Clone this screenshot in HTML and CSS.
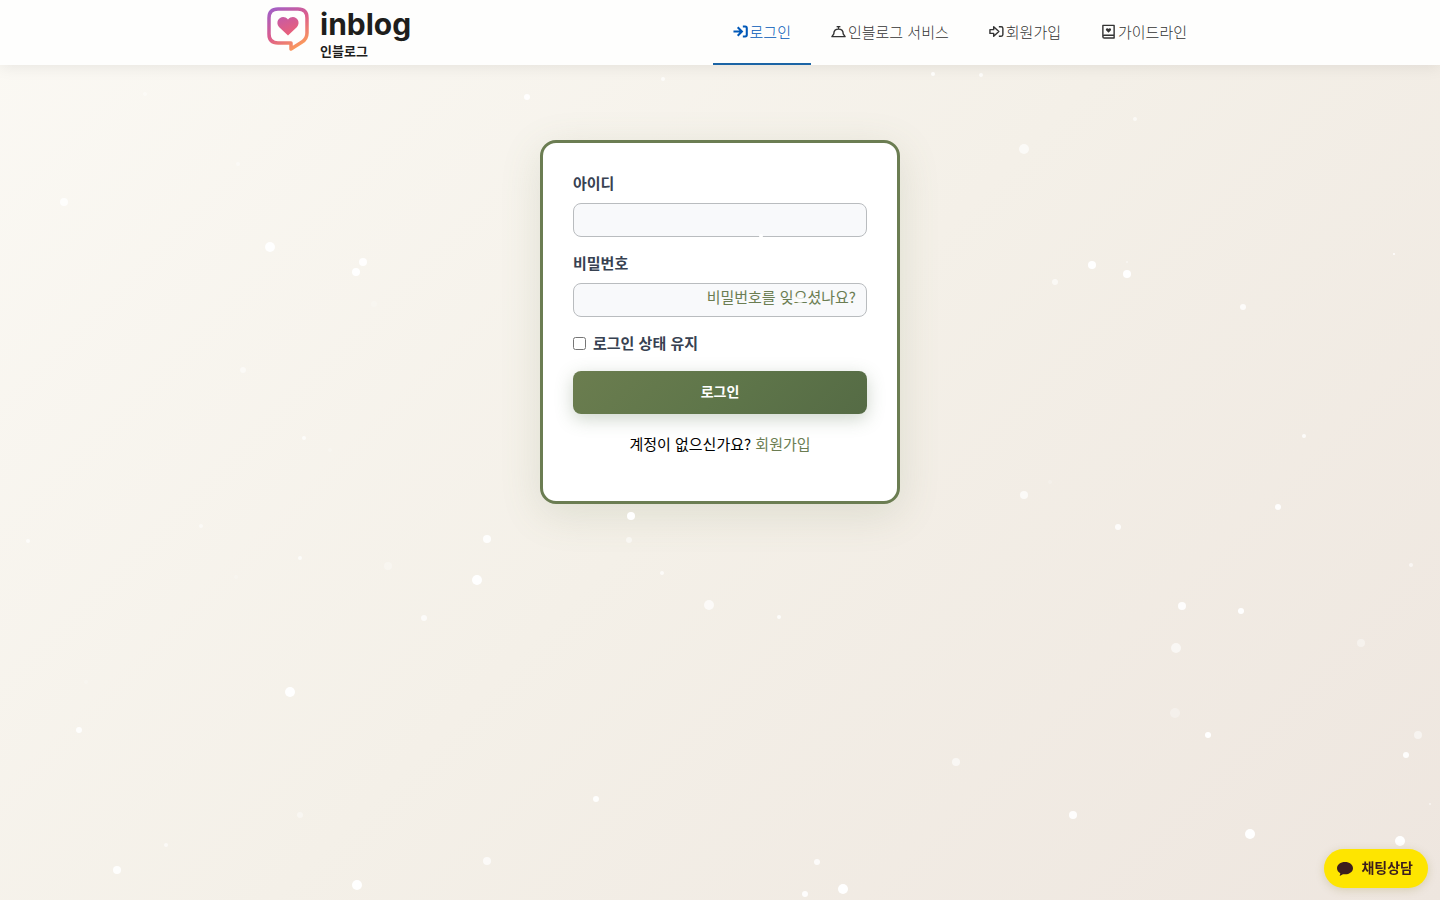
FILE: index.html
```html
<!DOCTYPE html>
<html lang="ko">
<head>
    <meta charset="UTF-8">
    <meta name="viewport" content="width=device-width, initial-scale=1.0">
    <title>로그인 - 인블로그</title>
    <link rel="stylesheet" href="styles.css">
</head>
<body>
    <header class="header">
        <div class="header-inner">
            <a href="#" class="logo">
                <svg class="logo-mark" width="42" height="45" viewBox="0 0 42 45" aria-hidden="true">
                    <defs>
                        <linearGradient id="logoGradient" x1="0.1" y1="0" x2="0.7" y2="1">
                            <stop offset="0" stop-color="#a45fc4"/>
                            <stop offset="0.5" stop-color="#dc5c8c"/>
                            <stop offset="1" stop-color="#fb9a5c"/>
                        </linearGradient>
                        <linearGradient id="heartGradient" x1="0" y1="0" x2="0.5" y2="1">
                            <stop offset="0" stop-color="#c45aa8"/>
                            <stop offset="1" stop-color="#ea6078"/>
                        </linearGradient>
                    </defs>
                    <path d="M11 2H31Q40 2 40 11V26Q40 32 35 35L24 42V36H11Q2 36 2 27V11Q2 2 11 2Z" fill="none" stroke="url(#logoGradient)" stroke-width="3.5" stroke-linejoin="round"/>
                    <path d="M21 28.500L12 20C7 14 15 6 21 12.500C27 6 35 14 30 20Z" fill="url(#heartGradient)"/>
                </svg>
                <span class="logo-text">
                    <span class="logo-name">inblog</span>
                    <span class="logo-sub">인블로그</span>
                </span>
            </a>

            <nav class="nav">
                <a href="#" class="nav-link active">
                    <svg class="nav-icon" viewBox="0 0 16 16" fill="none" stroke="currentColor" stroke-width="2.2" aria-hidden="true">
                        <path d="M0.500 8H9M5 3.500L9.500 8L5 12.500M10.500 2.700H13Q14.700 2.700 14.700 4.500V11.500Q14.700 13.300 13 13.300H10.500"/>
                    </svg>
                    <span>로그인</span>
                </a>
                <a href="#" class="nav-link">
                    <svg class="nav-icon" viewBox="0 0 16 16" fill="none" stroke="currentColor" stroke-width="1.5" stroke-linejoin="round" aria-hidden="true">
                        <path d="M6 2.800H10M8 3V5.500M3 10.500C3 7.500 5 5.500 8 5.500S13 7.500 13 10.500L15 13.500H1Z"/>
                    </svg>
                    <span>인블로그 서비스</span>
                </a>
                <a href="#" class="nav-link">
                    <svg class="nav-icon" viewBox="0 0 16 16" fill="none" stroke="currentColor" stroke-width="1.5" stroke-linejoin="round" aria-hidden="true">
                        <path d="M1 6H5V3L10.500 8L5 13V10H1ZM10.500 3H13Q14.800 3 14.800 4.800V11.200Q14.800 13 13 13H10.500"/>
                    </svg>
                    <span>회원가입</span>
                </a>
                <a href="#" class="nav-link">
                    <svg class="nav-icon" viewBox="0 0 16 16" fill="none" stroke="currentColor" stroke-width="1.5" stroke-linejoin="round" aria-hidden="true">
                        <path d="M2 1.500H14V15H3.500Q2 15 2 13.500ZM2 13.500Q2 12 3.500 12H14"/>
                        <path d="M8 9.300L5.400 6.700C4.500 5.200 6.700 3.700 8 5.200C9.300 3.700 11.500 5.200 10.600 6.700Z" fill="currentColor" stroke="none"/>
                    </svg>
                    <span>가이드라인</span>
                </a>
            </nav>
        </div>
    </header>

    <main class="main">
        <form class="login-card" action="#">
            <div class="field">
                <label for="user-id">아이디</label>
                <input type="text" id="user-id" name="user-id">
            </div>
            <div class="field">
                <label for="password">비밀번호</label>
                <div class="password-wrap">
                    <input type="password" id="password" name="password">
                    <a href="#" class="forgot">비밀번호를 잊으셨나요?</a>
                </div>
            </div>
            <div class="remember">
                <input type="checkbox" id="remember" name="remember">
                <label for="remember">로그인 상태 유지</label>
            </div>
            <button type="submit" class="login-button">로그인</button>
            <p class="signup">계정이 없으신가요? <a href="#">회원가입</a></p>
        </form>
    </main>

    <!-- Snow, drawn over the whole window -->
    <svg class="snow" aria-hidden="true" id="snow"></svg>

    <a href="#" class="chat-button">
        <svg width="16" height="16" viewBox="0 0 16 16" aria-hidden="true">
            <path d="M8 1C3.500 1 0 3.600 0 7.200C0 9.400 1.400 11.200 3.300 12.200L2.700 15L6 13.200L8 13.300C12.500 13.300 16 10.700 16 7.200C16 3.600 12.500 1 8 1Z" fill="#3c1e1e"/>
        </svg>
        <span class="chat-text">채팅상담</span>
    </a>

    <script>
        // x, y, radius, opacity of each flake
        const flakes = [
            [663, 79, 2, 0.7], [527, 97, 3, 0.9], [933, 74, 2, 0.8], [981, 75, 2, 0.7],
            [145, 94, 2, 0.4], [1135, 119, 2, 0.6], [1024, 149, 5, 0.65], [238, 164, 2, 0.4],
            [64, 202, 4, 0.8], [270, 247, 5, 0.95], [363, 262, 4, 0.9], [356, 272, 4, 1],
            [374, 304, 3, 0.2], [243, 370, 3, 0.5], [304, 438, 2, 0.7], [330, 450, 2, 0.2],
            [761, 236, 2, 1], [800, 299, 4, 0.8],
            [1092, 265, 4, 1], [1127, 274, 4, 1], [1127, 262, 1, 0.5], [1055, 282, 3, 0.6],
            [1243, 307, 3, 0.8], [1394, 254, 1, 1], [1304, 436, 2, 0.8], [1050, 482, 2, 0.2],
            [631, 516, 4, 1], [629, 540, 3, 0.5], [487, 539, 4, 0.9], [477, 580, 5, 1],
            [388, 566, 4, 0.3], [300, 558, 2, 0.7], [201, 526, 2, 0.5], [28, 541, 2, 0.7],
            [236, 577, 2, 0.2], [424, 618, 3, 0.7], [662, 573, 2, 0.7], [709, 605, 5, 0.7],
            [779, 617, 2, 0.8], [290, 692, 5, 1], [79, 730, 3, 0.9], [86, 682, 2, 0.2],
            [596, 799, 3, 0.9], [300, 815, 3, 0.4], [166, 845, 2, 0.6], [117, 870, 4, 0.9],
            [357, 885, 5, 1], [487, 861, 4, 0.7], [1024, 495, 4, 0.7], [1118, 527, 3, 0.8],
            [1278, 507, 3, 0.9], [1411, 565, 2, 0.6], [1182, 606, 4, 0.9], [1241, 611, 3, 1],
            [1176, 648, 5, 0.6], [1361, 643, 4, 0.4], [1175, 713, 5, 0.3], [1208, 735, 3, 1],
            [956, 762, 4, 0.6], [1418, 735, 4, 0.5], [1406, 755, 3, 0.9], [1430, 804, 1, 0.6],
            [1073, 815, 4, 0.9], [1250, 834, 5, 1], [1400, 841, 5, 1], [817, 862, 3, 0.8],
            [843, 889, 5, 1], [805, 894, 3, 0.9]
        ];

        document.getElementById('snow').innerHTML = flakes.map(([x, y, r, o]) =>
            `<circle cx="${x}" cy="${y}" r="${r}" fill="#fff" opacity="${o}"/>`
        ).join('');
    </script>
</body>
</html>
```
FILE: styles.css
```css
* {
    box-sizing: border-box;
}

body {
    margin: 0;
    min-height: 100vh;
    font-family: "Noto Sans CJK KR", "Noto Sans", sans-serif;
    font-size: 15px;
    line-height: 20px;
    color: #000;
    background: linear-gradient(135deg, #fbf9f4 0%, #f4f0e8 50%, #eee6df 100%);
}

a {
    text-decoration: none;
}

/* Header */
.header {
    background-color: #fefefd;
    box-shadow: 0 2px 15px rgba(0, 0, 0, 0.08);
}

.header-inner {
    display: flex;
    justify-content: space-between;
    max-width: 974px;
    height: 65px;
    margin: 0 auto;
    padding-left: 34px;
}

.logo {
    display: flex;
    gap: 11px;
    padding-top: 6px;
    color: #1e1e1c;
}

.logo-mark {
    margin-top: 1px;
}

.logo-text {
    display: flex;
    flex-direction: column;
}

.logo-name {
    font-family: Inter, sans-serif;
    font-size: 30px;
    font-weight: 700;
    line-height: 36px;
}

.logo-sub {
    font-size: 13px;
    font-weight: 700;
    line-height: 18px;
}

.nav {
    display: flex;
}

.nav-link {
    display: flex;
    align-items: center;
    gap: 2px;
    padding: 0 20px;
    font-weight: 300;
    color: #333;
    border-bottom: 2px solid transparent;
}

.nav-link.active {
    color: #0058b8;
    border-bottom-color: #1b64a5;
}

.nav-icon {
    width: 15px;
    height: 15px;
}

/* Login form */
.main {
    display: flex;
    justify-content: center;
    padding: 75px 20px;
}

.login-card {
    width: 100%;
    max-width: 360px;
    padding: 30px;
    background-color: #fff;
    border: 3px solid #6b7d52;
    border-radius: 16px;
    box-shadow: 0 10px 40px rgba(107, 125, 79, 0.16);
}

.field {
    margin-bottom: 16px;
}

.field label {
    display: block;
    margin-bottom: 10px;
    font-weight: 700;
    color: #374151;
}

.field input {
    display: block;
    width: 100%;
    height: 34px;
    padding: 0 12px;
    font-size: 15px;
    background-color: #f8f9fb;
    border: 1px solid #b9bcbf;
    border-radius: 8px;
}

.password-wrap {
    position: relative;
}

.forgot {
    position: absolute;
    top: 4px;
    right: 11px;
}

.forgot,
.signup a {
    color: #6b7d52;
}

.remember {
    display: flex;
    align-items: center;
    gap: 7px;
    margin-bottom: 18px;
    font-weight: 700;
    color: #374151;
}

.remember input {
    width: 13px;
    height: 13px;
    margin: 0;
}

.login-button {
    display: block;
    width: 100%;
    height: 43px;
    padding: 0 0 4px;
    font-family: inherit;
    font-size: 14px;
    font-weight: 700;
    color: #fff;
    background: linear-gradient(135deg, #6b7d4f 0%, #5f764a 50%, #556b45 100%);
    border: none;
    border-radius: 8px;
    box-shadow: 0 5px 18px rgba(75, 105, 70, 0.28);
    cursor: pointer;
}

.signup {
    margin: 20px 0 17px;
    text-align: center;
}

/* Snow */
.snow {
    position: fixed;
    top: 0;
    left: 0;
    width: 100%;
    height: 100%;
    pointer-events: none;
}

/* Chat */
.chat-button {
    position: fixed;
    right: 12px;
    bottom: 12px;
    display: flex;
    align-items: center;
    gap: 8px;
    height: 39px;
    padding: 0 15px 0 13px;
    font-size: 14px;
    font-weight: 700;
    color: #3c1e1e;
    background-color: #fee500;
    border-radius: 20px;
    box-shadow: 0 2px 10px rgba(120, 110, 0, 0.2);
}

.chat-text {
    padding-bottom: 4px;
}
```
